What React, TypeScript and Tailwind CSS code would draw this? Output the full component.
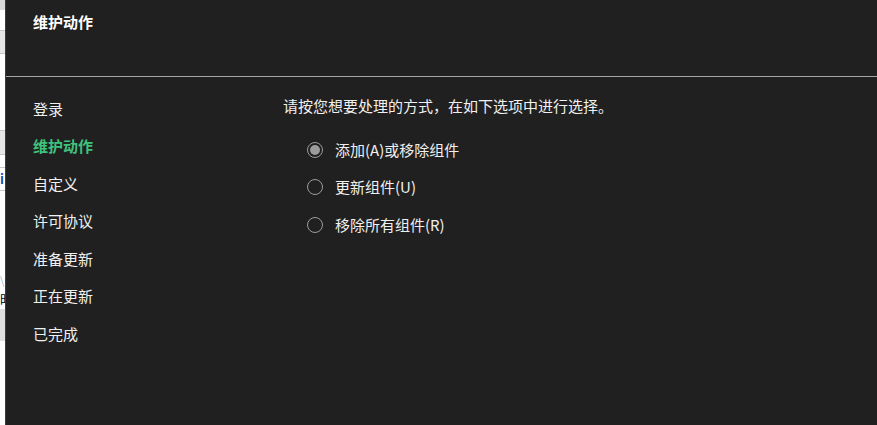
import React, { useState } from 'react';

const steps = ['登录', '维护动作', '自定义', '许可协议', '准备更新', '正在更新', '已完成'];

const options = [
  { id: 'modify', label: '添加(A)或移除组件' },
  { id: 'update', label: '更新组件(U)' },
  { id: 'remove', label: '移除所有组件(R)' },
];

const font = { fontFamily: '"Segoe UI", "Noto Sans CJK SC", sans-serif' };

const App: React.FC = () => {
  const [choice, setChoice] = useState('modify');

  return (
    <div className="flex w-[877px] h-[425px] overflow-hidden bg-[#202020]" style={font}>
      {/* Background window peeking out at the left edge */}
      <div className="w-[5px] shrink-0 flex flex-col bg-white overflow-hidden">
        <div className="h-[10px] bg-[#d9d9d9]" />
        <div className="h-[20px]" />
        <div className="h-[24px] bg-[#e6e6e6] border-y border-[#c8c8c8]" />
        <div className="h-[76px]" />
        <div className="h-[25px] bg-[#e6e6e6] border-y border-[#c8c8c8]" />
        <div className="h-[12px]" />
        <div className="h-[24px] border-y border-[#c8c8c8] text-[#1a4fb0] text-[13px] leading-[22px] font-bold">i</div>
        <div className="h-[80px]" />
        <div className="h-[18px] overflow-hidden text-[#9bb8d8] text-[11px] leading-[18px]">\</div>
        <div className="h-[20px] overflow-hidden text-black text-[13px] leading-[20px]">时</div>
        <div className="h-[32px] bg-[#e0e0e0]" />
        <div className="flex-1" />
      </div>
      <div className="w-px shrink-0 bg-[#3c3c3c]" />

      {/* Installer window */}
      <div className="flex-1 flex flex-col text-[#f0f0f0]">
        <div className="h-[76px] pl-[27px] pt-[11px]">
          <h1 className="text-[15px] leading-[22px] font-semibold text-white">维护动作</h1>
        </div>
        <div className="h-px bg-[#a5a5a5]" />

        <div className="flex flex-1">
          {/* Steps */}
          <nav className="w-[277px] shrink-0 pl-[27px] pt-[13px]">
            <ul>
              {steps.map((step) => (
                <li
                  key={step}
                  className={`h-[37.5px] flex items-center text-[15px] ${
                    step === '维护动作' ? 'text-[#3fc27d] font-semibold' : 'text-[#f0f0f0]'
                  }`}
                >
                  {step}
                </li>
              ))}
            </ul>
          </nav>

          {/* Options */}
          <div className="flex-1 pt-[18px]">
            <p className="text-[15px] leading-[22px] text-[#f0f0f0]">请按您想要处理的方式，在如下选项中进行选择。</p>
            <div className="mt-[14px] pl-[24px]">
              {options.map((opt) => (
                <button
                  key={opt.id}
                  onClick={() => setChoice(opt.id)}
                  className="flex items-center h-[37.5px] text-left"
                >
                  <span className="w-[16px] h-[16px] rounded-full border border-[#9c9c9c] flex items-center justify-center">
                    {choice === opt.id && <span className="w-[10px] h-[10px] rounded-full bg-[#9c9c9c]" />}
                  </span>
                  <span className="ml-[12px] text-[15px] text-[#f0f0f0]">{opt.label}</span>
                </button>
              ))}
            </div>
          </div>
        </div>
      </div>
    </div>
  );
};

export default App;
